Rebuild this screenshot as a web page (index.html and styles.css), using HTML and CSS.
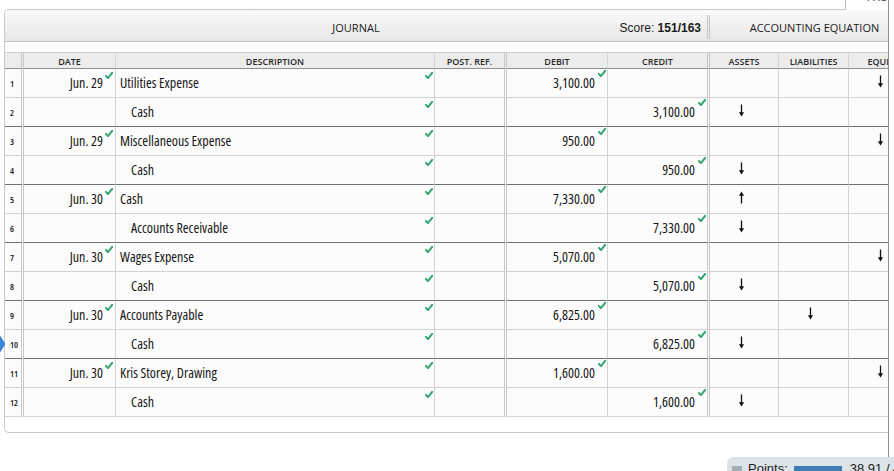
FILE: index.html
```html
<!DOCTYPE html>
<html>
<head>
<meta charset="utf-8">
<link rel="stylesheet" href="styles.css">
</head>
<body>
<div class="frame">
  <div class="topline"><div class="pagetab"><span>PAGE</span></div></div>
  <div class="panel">
    <div class="titlebar">
      <div class="journal"><span></span><span class="jtitle">JOURNAL</span><span class="score">Score: <b>151/163</b></span></div>
      <div class="equation">ACCOUNTING EQUATION</div>
    </div>
    <div class="gap"></div>
    <div class="row colhead">
      <div class="cell c-num"></div>
      <div class="cell">DATE</div>
      <div class="cell">DESCRIPTION</div>
      <div class="cell c-post">POST. REF.</div>
      <div class="cell">DEBIT</div>
      <div class="cell c-credit">CREDIT</div>
      <div class="cell">ASSETS</div>
      <div class="cell">LIABILITIES</div>
      <div class="cell">EQUITY</div>
    </div>

    <div class="row">
      <div class="cell c-num">1</div>
      <div class="cell c-date">Jun. 29<svg class="chk" viewBox="0 0 8 7"><path d="M0.8 3.9L2.9 6.2L7.3 0.7"/></svg></div>
      <div class="cell c-desc">Utilities Expense<svg class="chk" viewBox="0 0 8 7"><path d="M0.8 3.9L2.9 6.2L7.3 0.7"/></svg></div>
      <div class="cell c-post"></div>
      <div class="cell c-amt c-debit">3,100.00<svg class="chk" viewBox="0 0 8 7"><path d="M0.8 3.9L2.9 6.2L7.3 0.7"/></svg></div>
      <div class="cell c-amt c-credit"></div>
      <div class="cell c-eq"></div>
      <div class="cell c-eq"></div>
      <div class="cell c-eq"><svg class="arr" viewBox="0 0 7 13"><path class="stem" d="M3.5 0.5V10"/><path class="head" d="M0.9 8.3L3.5 12.6L6.1 8.3Z"/></svg></div>
    </div>
    <div class="row end">
      <div class="cell c-num">2</div>
      <div class="cell c-date"></div>
      <div class="cell c-desc ind">Cash<svg class="chk" viewBox="0 0 8 7"><path d="M0.8 3.9L2.9 6.2L7.3 0.7"/></svg></div>
      <div class="cell c-post"></div>
      <div class="cell c-amt c-debit"></div>
      <div class="cell c-amt c-credit">3,100.00<svg class="chk" viewBox="0 0 8 7"><path d="M0.8 3.9L2.9 6.2L7.3 0.7"/></svg></div>
      <div class="cell c-eq"><svg class="arr" viewBox="0 0 7 13"><path class="stem" d="M3.5 0.5V10"/><path class="head" d="M0.9 8.3L3.5 12.6L6.1 8.3Z"/></svg></div>
      <div class="cell c-eq"></div>
      <div class="cell c-eq"></div>
    </div>

    <div class="row">
      <div class="cell c-num">3</div>
      <div class="cell c-date">Jun. 29<svg class="chk" viewBox="0 0 8 7"><path d="M0.8 3.9L2.9 6.2L7.3 0.7"/></svg></div>
      <div class="cell c-desc">Miscellaneous Expense<svg class="chk" viewBox="0 0 8 7"><path d="M0.8 3.9L2.9 6.2L7.3 0.7"/></svg></div>
      <div class="cell c-post"></div>
      <div class="cell c-amt c-debit">950.00<svg class="chk" viewBox="0 0 8 7"><path d="M0.8 3.9L2.9 6.2L7.3 0.7"/></svg></div>
      <div class="cell c-amt c-credit"></div>
      <div class="cell c-eq"></div>
      <div class="cell c-eq"></div>
      <div class="cell c-eq"><svg class="arr" viewBox="0 0 7 13"><path class="stem" d="M3.5 0.5V10"/><path class="head" d="M0.9 8.3L3.5 12.6L6.1 8.3Z"/></svg></div>
    </div>
    <div class="row end">
      <div class="cell c-num">4</div>
      <div class="cell c-date"></div>
      <div class="cell c-desc ind">Cash<svg class="chk" viewBox="0 0 8 7"><path d="M0.8 3.9L2.9 6.2L7.3 0.7"/></svg></div>
      <div class="cell c-post"></div>
      <div class="cell c-amt c-debit"></div>
      <div class="cell c-amt c-credit">950.00<svg class="chk" viewBox="0 0 8 7"><path d="M0.8 3.9L2.9 6.2L7.3 0.7"/></svg></div>
      <div class="cell c-eq"><svg class="arr" viewBox="0 0 7 13"><path class="stem" d="M3.5 0.5V10"/><path class="head" d="M0.9 8.3L3.5 12.6L6.1 8.3Z"/></svg></div>
      <div class="cell c-eq"></div>
      <div class="cell c-eq"></div>
    </div>

    <div class="row">
      <div class="cell c-num">5</div>
      <div class="cell c-date">Jun. 30<svg class="chk" viewBox="0 0 8 7"><path d="M0.8 3.9L2.9 6.2L7.3 0.7"/></svg></div>
      <div class="cell c-desc">Cash<svg class="chk" viewBox="0 0 8 7"><path d="M0.8 3.9L2.9 6.2L7.3 0.7"/></svg></div>
      <div class="cell c-post"></div>
      <div class="cell c-amt c-debit">7,330.00<svg class="chk" viewBox="0 0 8 7"><path d="M0.8 3.9L2.9 6.2L7.3 0.7"/></svg></div>
      <div class="cell c-amt c-credit"></div>
      <div class="cell c-eq"><svg class="arr up" viewBox="0 0 7 13"><path class="stem" d="M3.5 0.5V10"/><path class="head" d="M0.9 8.3L3.5 12.6L6.1 8.3Z"/></svg></div>
      <div class="cell c-eq"></div>
      <div class="cell c-eq"></div>
    </div>
    <div class="row end">
      <div class="cell c-num">6</div>
      <div class="cell c-date"></div>
      <div class="cell c-desc ind">Accounts Receivable<svg class="chk" viewBox="0 0 8 7"><path d="M0.8 3.9L2.9 6.2L7.3 0.7"/></svg></div>
      <div class="cell c-post"></div>
      <div class="cell c-amt c-debit"></div>
      <div class="cell c-amt c-credit">7,330.00<svg class="chk" viewBox="0 0 8 7"><path d="M0.8 3.9L2.9 6.2L7.3 0.7"/></svg></div>
      <div class="cell c-eq"><svg class="arr" viewBox="0 0 7 13"><path class="stem" d="M3.5 0.5V10"/><path class="head" d="M0.9 8.3L3.5 12.6L6.1 8.3Z"/></svg></div>
      <div class="cell c-eq"></div>
      <div class="cell c-eq"></div>
    </div>

    <div class="row">
      <div class="cell c-num">7</div>
      <div class="cell c-date">Jun. 30<svg class="chk" viewBox="0 0 8 7"><path d="M0.8 3.9L2.9 6.2L7.3 0.7"/></svg></div>
      <div class="cell c-desc">Wages Expense<svg class="chk" viewBox="0 0 8 7"><path d="M0.8 3.9L2.9 6.2L7.3 0.7"/></svg></div>
      <div class="cell c-post"></div>
      <div class="cell c-amt c-debit">5,070.00<svg class="chk" viewBox="0 0 8 7"><path d="M0.8 3.9L2.9 6.2L7.3 0.7"/></svg></div>
      <div class="cell c-amt c-credit"></div>
      <div class="cell c-eq"></div>
      <div class="cell c-eq"></div>
      <div class="cell c-eq"><svg class="arr" viewBox="0 0 7 13"><path class="stem" d="M3.5 0.5V10"/><path class="head" d="M0.9 8.3L3.5 12.6L6.1 8.3Z"/></svg></div>
    </div>
    <div class="row end">
      <div class="cell c-num">8</div>
      <div class="cell c-date"></div>
      <div class="cell c-desc ind">Cash<svg class="chk" viewBox="0 0 8 7"><path d="M0.8 3.9L2.9 6.2L7.3 0.7"/></svg></div>
      <div class="cell c-post"></div>
      <div class="cell c-amt c-debit"></div>
      <div class="cell c-amt c-credit">5,070.00<svg class="chk" viewBox="0 0 8 7"><path d="M0.8 3.9L2.9 6.2L7.3 0.7"/></svg></div>
      <div class="cell c-eq"><svg class="arr" viewBox="0 0 7 13"><path class="stem" d="M3.5 0.5V10"/><path class="head" d="M0.9 8.3L3.5 12.6L6.1 8.3Z"/></svg></div>
      <div class="cell c-eq"></div>
      <div class="cell c-eq"></div>
    </div>

    <div class="row">
      <div class="cell c-num">9</div>
      <div class="cell c-date">Jun. 30<svg class="chk" viewBox="0 0 8 7"><path d="M0.8 3.9L2.9 6.2L7.3 0.7"/></svg></div>
      <div class="cell c-desc">Accounts Payable<svg class="chk" viewBox="0 0 8 7"><path d="M0.8 3.9L2.9 6.2L7.3 0.7"/></svg></div>
      <div class="cell c-post"></div>
      <div class="cell c-amt c-debit">6,825.00<svg class="chk" viewBox="0 0 8 7"><path d="M0.8 3.9L2.9 6.2L7.3 0.7"/></svg></div>
      <div class="cell c-amt c-credit"></div>
      <div class="cell c-eq"></div>
      <div class="cell c-eq"><svg class="arr" viewBox="0 0 7 13"><path class="stem" d="M3.5 0.5V10"/><path class="head" d="M0.9 8.3L3.5 12.6L6.1 8.3Z"/></svg></div>
      <div class="cell c-eq"></div>
    </div>
    <div class="row end">
      <div class="cell c-num">10</div>
      <div class="cell c-date"></div>
      <div class="cell c-desc ind">Cash<svg class="chk" viewBox="0 0 8 7"><path d="M0.8 3.9L2.9 6.2L7.3 0.7"/></svg></div>
      <div class="cell c-post"></div>
      <div class="cell c-amt c-debit"></div>
      <div class="cell c-amt c-credit">6,825.00<svg class="chk" viewBox="0 0 8 7"><path d="M0.8 3.9L2.9 6.2L7.3 0.7"/></svg></div>
      <div class="cell c-eq"><svg class="arr" viewBox="0 0 7 13"><path class="stem" d="M3.5 0.5V10"/><path class="head" d="M0.9 8.3L3.5 12.6L6.1 8.3Z"/></svg></div>
      <div class="cell c-eq"></div>
      <div class="cell c-eq"></div>
    </div>

    <div class="row">
      <div class="cell c-num">11</div>
      <div class="cell c-date">Jun. 30<svg class="chk" viewBox="0 0 8 7"><path d="M0.8 3.9L2.9 6.2L7.3 0.7"/></svg></div>
      <div class="cell c-desc">Kris Storey, Drawing<svg class="chk" viewBox="0 0 8 7"><path d="M0.8 3.9L2.9 6.2L7.3 0.7"/></svg></div>
      <div class="cell c-post"></div>
      <div class="cell c-amt c-debit">1,600.00<svg class="chk" viewBox="0 0 8 7"><path d="M0.8 3.9L2.9 6.2L7.3 0.7"/></svg></div>
      <div class="cell c-amt c-credit"></div>
      <div class="cell c-eq"></div>
      <div class="cell c-eq"></div>
      <div class="cell c-eq"><svg class="arr" viewBox="0 0 7 13"><path class="stem" d="M3.5 0.5V10"/><path class="head" d="M0.9 8.3L3.5 12.6L6.1 8.3Z"/></svg></div>
    </div>
    <div class="row">
      <div class="cell c-num">12</div>
      <div class="cell c-date"></div>
      <div class="cell c-desc ind">Cash<svg class="chk" viewBox="0 0 8 7"><path d="M0.8 3.9L2.9 6.2L7.3 0.7"/></svg></div>
      <div class="cell c-post"></div>
      <div class="cell c-amt c-debit"></div>
      <div class="cell c-amt c-credit">1,600.00<svg class="chk" viewBox="0 0 8 7"><path d="M0.8 3.9L2.9 6.2L7.3 0.7"/></svg></div>
      <div class="cell c-eq"><svg class="arr" viewBox="0 0 7 13"><path class="stem" d="M3.5 0.5V10"/><path class="head" d="M0.9 8.3L3.5 12.6L6.1 8.3Z"/></svg></div>
      <div class="cell c-eq"></div>
      <div class="cell c-eq"></div>
    </div>
    <div class="bottomgap"></div>
  </div>
  <svg class="navarrow" viewBox="0 0 6 18"><path d="M0 0.5L5.5 9L0 17.5Z"/></svg>
</div>
<div class="points">
  <span class="picon"></span>
  <span class="plabel">Points:</span>
  <span class="pbar"></span>
  <span class="pval">38.91 / 43</span>
</div>
</body>
</html>
```
FILE: styles.css
```css
html, body {
  margin: 0;
  padding: 0;
  overflow: hidden;
  background: #fff;
}
body {
  position: relative;
  width: 894px;
  height: 471px;
  font-family: "Open Sans", "Noto Sans", "DejaVu Sans Condensed", sans-serif;
  font-stretch: 75%;
  color: #161616;
}
.frame {
  position: relative;
  width: 889px;
  height: 471px;
  box-sizing: border-box;
  border-right: 1px solid #8c8c8c;
  overflow: hidden;
}
.topline {
  display: flex;
  justify-content: flex-end;
  align-items: flex-start;
  height: 9px;
}
.pagetab {
  position: relative;
  z-index: 2;
  width: 43px;
  height: 10px;
  box-sizing: border-box;
  border-left: 1px solid #bdbdbd;
  background: #fff;
  overflow: hidden;
  font-family: "Liberation Sans", sans-serif;
  font-stretch: normal;
  font-size: 10px;
  line-height: 10px;
  color: #333;
}
.pagetab span {
  display: block;
  margin-top: -7px;
  padding-left: 21px;
}
.panel {
  margin-left: 4px;
  width: 915px;
  border: 1px solid #c9c9c9;
  border-right: 0;
  border-radius: 5px 0 0 5px;
  background: #fff;
}
.titlebar {
  display: flex;
  height: 24px;
  padding: 5px 0 2px;
  background: linear-gradient(#fafafa, #e7e7e7);
  border-bottom: 1px solid #c4c4c4;
  border-top-left-radius: 4px;
  font-size: 11px;
  font-stretch: 88%;
  line-height: 24px;
  color: #1a1a1a;
}
.journal {
  width: 705px;
  box-sizing: border-box;
  display: grid;
  grid-template-columns: 1fr auto 1fr;
  border-right: 3px double #c4c4c4;
}
.jtitle {
  padding-top: 1px;
}
.score {
  justify-self: end;
  padding-right: 6px;
  padding-top: 1px;
  font-family: "Liberation Sans", sans-serif;
  font-stretch: normal;
  font-size: 12px;
}
.equation {
  width: 209px;
  text-align: center;
  padding-top: 1px;
}
.gap {
  height: 10px;
}
.row {
  display: grid;
  grid-template-columns: 19px 92px 319px 72px 101px 102px 69px 70px 70px;
}
.cell {
  position: relative;
  box-sizing: border-box;
  height: 29px;
  padding-bottom: 1px;
  border-right: 1px solid #d4d4d4;
  border-bottom: 1px solid #d4d4d4;
  background: #fcfcfc;
  display: flex;
  align-items: center;
  font-size: 14px;
  white-space: nowrap;
}
.row.end .cell {
  border-bottom-color: #707070;
}
.c-num, .c-post, .c-credit {
  border-right: 3px double #c8c8c8;
}
.colhead {
  border-top: 1px solid #cfcfcf;
}
.colhead .cell {
  height: 16px;
  background: #ececec;
  border-bottom-color: #8f8f8f;
  justify-content: center;
  font-size: 9px;
  font-weight: 600;
  font-stretch: 88%;
  color: #2a2a2a;
  padding-top: 1px;
  padding-bottom: 0;
}
.c-num {
  font-size: 9px;
  font-weight: 600;
  padding-left: 5px;
  padding-top: 1px;
}
.c-date {
  justify-content: flex-end;
  padding-right: 12px;
}
.c-desc {
  padding-left: 4px;
}
.c-desc.ind {
  padding-left: 15px;
}
.c-amt {
  justify-content: flex-end;
  padding-right: 12px;
}
.c-eq {
  justify-content: center;
  padding-right: 6px;
}
.chk {
  position: absolute;
  width: 8px;
  height: 7px;
  fill: none;
  stroke: #36a673;
  stroke-width: 2;
  stroke-linecap: round;
  stroke-linejoin: round;
}
.c-date .chk {
  top: 3px;
  right: 2px;
}
.c-desc .chk {
  top: 3px;
  right: 1px;
}
.c-amt .chk {
  top: 1px;
  right: 1px;
}
.arr {
  width: 7px;
  height: 13px;
  margin-top: -3px;
}
.arr.up {
  transform: rotate(180deg);
}
.arr .stem {
  stroke: #111;
  stroke-width: 1.3;
}
.arr .head {
  fill: #111;
}
.bottomgap {
  height: 15px;
}
.navarrow {
  position: absolute;
  left: 0;
  top: 335px;
  width: 6px;
  height: 18px;
  fill: #3b84d8;
}
.points {
  position: absolute;
  left: 727px;
  top: 457px;
  width: 200px;
  height: 30px;
  box-sizing: border-box;
  padding: 4px 0 0 5px;
  background: #dde4e9;
  border-radius: 6px 0 0 0;
  display: flex;
  align-items: flex-start;
  font-family: "Liberation Sans", sans-serif;
  font-stretch: normal;
  font-size: 13px;
  line-height: 15px;
  color: #222;
  white-space: nowrap;
}
.picon {
  width: 10px;
  height: 10px;
  margin-top: 5px;
  background: #a4aeb6;
}
.plabel {
  margin-left: 6px;
}
.pbar {
  width: 48px;
  height: 10px;
  margin: 5px 0 0 6px;
  background: #3e7cb3;
}
.pval {
  margin-left: 8px;
}
```
